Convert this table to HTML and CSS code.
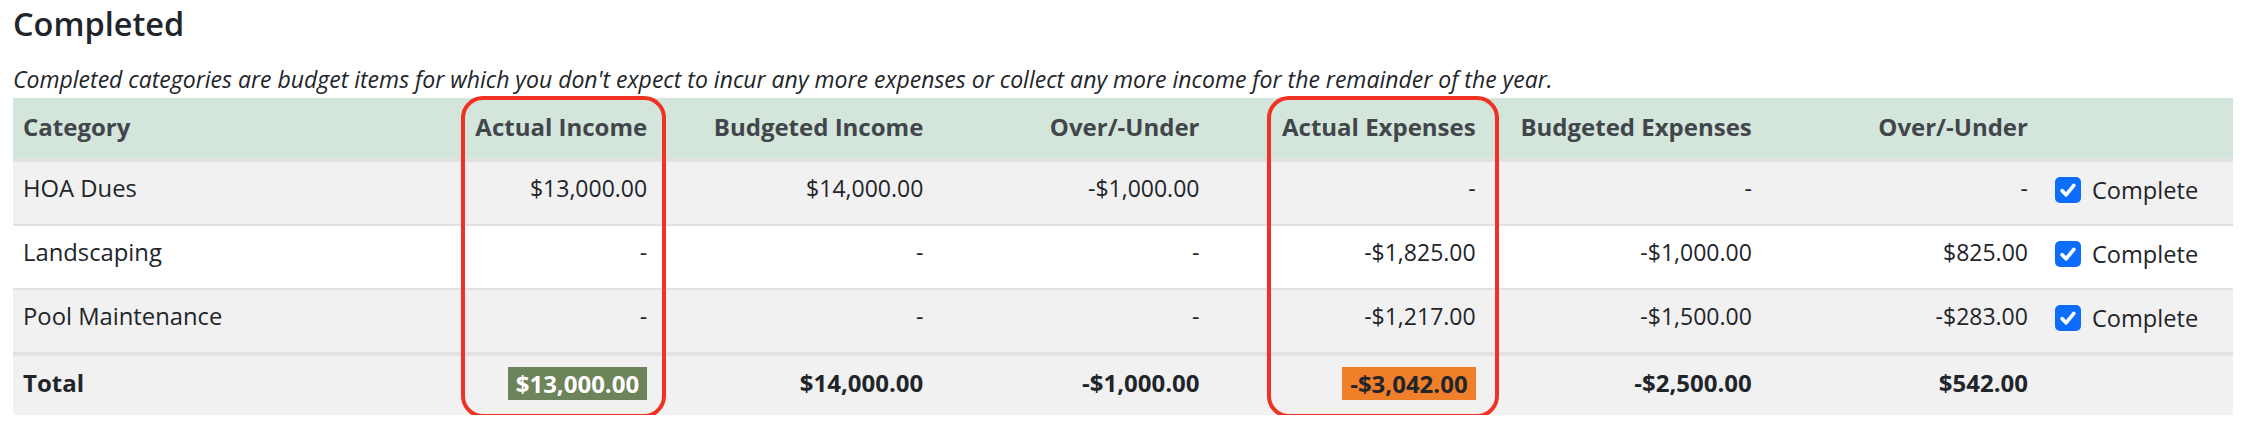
FILE: index.html
```html
<!DOCTYPE html>
<html lang="en">
<head>
<meta charset="utf-8">
<title>Completed</title>
<link rel="stylesheet" href="styles.css">
</head>
<body>
<section class="panel">
  <h2 class="title">Completed</h2>
  <p class="desc">Completed categories are budget items for which you don't expect to incur any more expenses or collect any more income for the remainder of the year.</p>
  <div class="table-wrap">
    <table class="budget">
      <colgroup>
        <col class="c-cat">
        <col class="c-num"><col class="c-num"><col class="c-num">
        <col class="c-num"><col class="c-num"><col class="c-num">
        <col class="c-chk">
      </colgroup>
      <thead>
        <tr>
          <th class="left">Category</th>
          <th>Actual Income</th>
          <th>Budgeted Income</th>
          <th>Over/-Under</th>
          <th>Actual Expenses</th>
          <th>Budgeted Expenses</th>
          <th>Over/-Under</th>
          <th class="left"></th>
        </tr>
      </thead>
      <tbody>
        <tr>
          <td class="left name">HOA Dues</td>
          <td>$13,000.00</td>
          <td>$14,000.00</td>
          <td>-$1,000.00</td>
          <td>-</td>
          <td>-</td>
          <td>-</td>
          <td class="chk-cell"><label class="check"><span class="box"><svg viewBox="0 0 20 20" width="26" height="26"><path d="M5.5 10.5l3 3.2 6-7.2" fill="none" stroke="#fff" stroke-width="2.8" stroke-linecap="round" stroke-linejoin="round"/></svg></span><span class="check-label">Complete</span></label></td>
        </tr>
        <tr>
          <td class="left name">Landscaping</td>
          <td>-</td>
          <td>-</td>
          <td>-</td>
          <td>-$1,825.00</td>
          <td>-$1,000.00</td>
          <td>$825.00</td>
          <td class="chk-cell"><label class="check"><span class="box"><svg viewBox="0 0 20 20" width="26" height="26"><path d="M5.5 10.5l3 3.2 6-7.2" fill="none" stroke="#fff" stroke-width="2.8" stroke-linecap="round" stroke-linejoin="round"/></svg></span><span class="check-label">Complete</span></label></td>
        </tr>
        <tr>
          <td class="left name">Pool Maintenance</td>
          <td>-</td>
          <td>-</td>
          <td>-</td>
          <td>-$1,217.00</td>
          <td>-$1,500.00</td>
          <td>-$283.00</td>
          <td class="chk-cell"><label class="check"><span class="box"><svg viewBox="0 0 20 20" width="26" height="26"><path d="M5.5 10.5l3 3.2 6-7.2" fill="none" stroke="#fff" stroke-width="2.8" stroke-linecap="round" stroke-linejoin="round"/></svg></span><span class="check-label">Complete</span></label></td>
        </tr>
      </tbody>
      <tfoot>
        <tr>
          <th class="left">Total</th>
          <th><span class="hl hl-income">$13,000.00</span></th>
          <th>$14,000.00</th>
          <th>-$1,000.00</th>
          <th><span class="hl hl-expense">-$3,042.00</span></th>
          <th>-$2,500.00</th>
          <th>$542.00</th>
          <th></th>
        </tr>
      </tfoot>
    </table>
    <div class="callout callout-income"></div>
    <div class="callout callout-expense"></div>
  </div>
</section>
</body>
</html>
```
FILE: styles.css
```css
* { box-sizing: border-box; }
html, body { margin: 0; padding: 0; background: #fff; }
body {
  font-family: "Open Sans", "Liberation Sans", sans-serif;
  color: #212529;
  font-size: 23px;
  line-height: 32px;
}
.panel { padding: 4px 15px 0 13px; }
.title {
  margin: 0;
  font-size: 32.5px;
  font-weight: 600;
  line-height: 40px;
  color: #212529;
}
.desc {
  margin: 19px 0 3px 0;
  font-style: italic;
  font-size: 23px;
  line-height: 32px;
}
.table-wrap { position: relative; width: 2220px; }
.budget {
  width: 2220px;
  border-collapse: collapse;
  table-layout: fixed;
}
.c-cat { width: 368px; }
.c-num { width: 276.16px; }
.c-chk { width: 195px; }
.budget th, .budget td {
  text-align: right;
  vertical-align: top;
  padding: 13px 10px;
  white-space: nowrap;
}
.budget .left { text-align: left; }
.budget thead th {
  background: #d4e5db;
  color: #41464b;
  font-weight: 700;
  font-size: 24px;
  padding: 13px 10px 15px;
  border-bottom: 4px solid #e2e2e2;
}
.budget tbody td {
  padding: 10px 10px 16px;
  border-bottom: 2px solid #e2e2e2;
}
.budget tbody td.name { font-size: 23.8px; }
.budget tbody tr:nth-child(odd) td { background: #f1f1f1; }
.budget tbody tr:nth-child(even) td { background: #fff; }
.budget tbody tr:last-child td { border-bottom: 4px solid #e2e2e2; }
.budget tfoot th {
  background: #f1f1f1;
  font-weight: 700;
  font-size: 24px;
  padding: 11px 10px 15px;
}
.budget .chk-cell { padding: 12px 10px 14px 17px; text-align: left; }
.check {
  display: flex;
  align-items: center;
  gap: 11px;
  height: 36px;
  padding-bottom: 4px;
}
.check-label { font-size: 23.6px; }
.box {
  width: 26px;
  height: 26px;
  flex: none;
  border-radius: 5px;
  background: #0d6efd;
  display: flex;
  align-items: center;
  justify-content: center;
}
.box svg { display: block; }
.hl {
  display: inline-block;
  padding: 0 8px;
  line-height: 33px;
}
.hl-income { background: #6d835a; color: #fff; }
.hl-expense { background: #ef7f29; color: #212529; }
.callout {
  position: absolute;
  top: -2px;
  height: 322px;
  border: 4px solid #f03223;
  border-radius: 22px;
  pointer-events: none;
}
.callout-income { left: 448px; width: 205px; }
.callout-expense { left: 1254px; width: 232px; }
```
